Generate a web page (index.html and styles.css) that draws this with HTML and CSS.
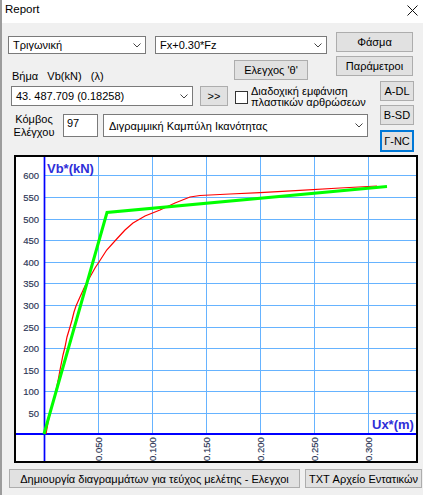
FILE: index.html
```html
<!DOCTYPE html>
<html>
<head>
<meta charset="utf-8">
<title>Report</title>
<link rel="stylesheet" href="styles.css">
</head>
<body>
<div class="titlebar">
  <span class="title">Report</span>
  <svg class="close" width="11" height="11" viewBox="0 0 11 11"><path d="M0.5 0.5 L10.5 10.5 M10.5 0.5 L0.5 10.5" stroke="#111" stroke-width="1" fill="none"/></svg>
</div>
<div class="content">
  <div class="block-a">
    <div class="left-a">
      <div class="row1">
        <div class="combo c1"><span class="ctext">Τριγωνική</span><span class="chevbox"><svg width="8" height="5" viewBox="0 0 8 5"><path d="M0.5 0.5 L4 4 L7.5 0.5" fill="none" stroke="#444"/></svg></span></div>
        <div class="combo c2"><span class="ctext">Fx+0.30*Fz</span><span class="chevbox"><svg width="8" height="5" viewBox="0 0 8 5"><path d="M0.5 0.5 L4 4 L7.5 0.5" fill="none" stroke="#444"/></svg></span></div>
      </div>
      <div class="row2">
        <span class="step-label">Βήμα&nbsp;&nbsp;&nbsp;Vb(kN)&nbsp;&nbsp;&nbsp;(λ)</span>
        <div class="btn theta">Ελεγχος 'θ'</div>
      </div>
    </div>
    <div class="right-a">
      <div class="btn wide">Φάσμα</div>
      <div class="btn wide">Παράμετροι</div>
    </div>
  </div>
  <div class="block-b">
    <div class="left-b">
      <div class="row3">
        <div class="combo c3"><span class="ctext">43. 487.709 (0.18258)</span><span class="chevbox"><svg width="8" height="5" viewBox="0 0 8 5"><path d="M0.5 0.5 L4 4 L7.5 0.5" fill="none" stroke="#444"/></svg></span></div>
        <div class="btn next">&gt;&gt;</div>
        <div class="checkbox"></div>
        <div class="cb-label">Διαδοχική εμφάνιση<br>πλαστικών αρθρώσεων</div>
      </div>
      <div class="row4">
        <div class="node-label">Κόμβος<br>Ελέγχου</div>
        <div class="edit">97</div>
        <div class="combo c4"><span class="ctext">Διγραμμική Καμπύλη Ικανότητας</span><span class="chevbox"><svg width="8" height="5" viewBox="0 0 8 5"><path d="M0.5 0.5 L4 4 L7.5 0.5" fill="none" stroke="#444"/></svg></span></div>
      </div>
    </div>
    <div class="right-b">
      <div class="btn small">A-DL</div>
      <div class="btn small sb">B-SD</div>
      <div class="btn small active">Γ-NC</div>
    </div>
  </div>
  <div class="chart">
    <svg class="plot" width="404" height="308" viewBox="14 155 404 308">
      <rect x="15" y="156" width="402" height="306" fill="#fff" stroke="#000" stroke-width="2"/>
      <g stroke="#66b3ff" stroke-width="1" shape-rendering="crispEdges" fill="none">
        <path d="M98.5 157V434M152.5 157V434M206.5 157V434M260.5 157V434M314.5 157V434M368.5 157V434"/>
        <path d="M44 175.5H416M44 197.5H416M44 219.5H416M44 240.5H416M44 262.5H416M44 283.5H416M44 305.5H416M44 327.5H416M44 348.5H416M44 370.5H416M44 391.5H416M44 413.5H416"/>
      </g>
      <g stroke="#0000ff" fill="none">
        <path d="M16 434H416" stroke-width="2"/>
        <path d="M44.5 157V461" stroke-width="1.7"/>
      </g>
      <g class="ylab" text-anchor="end">
        <text x="39" y="178.8">600</text>
        <text x="39" y="200.8">550</text>
        <text x="39" y="222.8">500</text>
        <text x="39" y="243.8">450</text>
        <text x="39" y="265.8">400</text>
        <text x="39" y="286.8">350</text>
        <text x="39" y="308.8">300</text>
        <text x="39" y="330.8">250</text>
        <text x="39" y="351.8">200</text>
        <text x="39" y="373.8">150</text>
        <text x="39" y="394.8">100</text>
        <text x="39" y="416.8">50</text>
      </g>
      <g class="xlab">
        <text transform="translate(101.8 461) rotate(-90)">0.050</text>
        <text transform="translate(155.8 461) rotate(-90)">0.100</text>
        <text transform="translate(209.8 461) rotate(-90)">0.150</text>
        <text transform="translate(263.8 461) rotate(-90)">0.200</text>
        <text transform="translate(317.8 461) rotate(-90)">0.250</text>
        <text transform="translate(371.8 461) rotate(-90)">0.300</text>
      </g>
      <text class="axtitle" x="47" y="173">Vb*(kN)</text>
      <text class="axtitle" x="372" y="428.5">Ux*(m)</text>
      <polyline fill="none" stroke="#ff0000" stroke-width="1.2" points="46,434 48.5,420 51,410 55,395 58,381 60,370 63,355 65,347 67,337 70,327 72,320 74,312 76,306 80,297 85,286 90,277 95,268 99,262 106.7,250 116.7,239 125,230 133,223 145,216 160,210 175,203 190,197 200,195.5 230,194 260,192.7 300,190.3 340,188 377,186"/>
      <polyline fill="none" stroke="#00ff00" stroke-width="3" points="44,434 107,212.5 387,186.5"/>
    </svg>
  </div>
  <div class="bottom">
    <div class="btn b1">Δημιουργία διαγραμμάτων για τεύχος μελέτης - Ελεγχοι</div>
    <div class="btn b2">TXT Αρχείο Εντατικών</div>
  </div>
</div>
</body>
</html>
```

FILE: styles.css
```css
* { box-sizing: border-box; }
html, body {
  margin: 0;
  padding: 0;
}
body {
  width: 423px;
  height: 495px;
  overflow: hidden;
  background: #f0f0f0;
  font-family: "Liberation Sans", Arial, sans-serif;
  font-size: 11px;
  color: #000;
}
.titlebar {
  height: 23px;
  background: #fff;
  border-left: 2px solid #9c9c9c;
  display: flex;
  align-items: flex-start;
  padding: 2px 0 0 3px;
}
.title {
  font-size: 11.5px;
  line-height: 15px;
}
.close {
  margin-left: auto;
  margin-right: 5px;
  margin-top: 3px;
}
.content {
  height: 472px;
  border-left: 2px solid #9c9c9c;
  padding: 9px 9px 0 6px;
}
.block-a {
  display: flex;
  height: 49px;
}
.left-a {
  width: 328px;
}
.row1 {
  display: flex;
  gap: 9px;
  margin-top: 4px;
}
.combo {
  background: #fff;
  border: 1px solid #7a7a7a;
  display: flex;
  align-items: center;
  justify-content: space-between;
  padding-left: 4px;
  white-space: nowrap;
}
.chevbox {
  width: 17px;
  display: flex;
  justify-content: center;
  align-items: center;
}
.chevbox svg { display: block; }
.c1 { width: 138px; height: 18px; }
.c2 { width: 172px; height: 18px; }
.row2 {
  display: flex;
  align-items: flex-end;
  margin-top: 6px;
  height: 20px;
}
.step-label {
  margin-left: 4px;
  line-height: 13px;
  margin-bottom: -3px;
  white-space: nowrap;
}
.btn {
  background: #e1e1e1;
  border: 1px solid #adadad;
  display: flex;
  align-items: center;
  justify-content: center;
  white-space: nowrap;
  flex-shrink: 0;
}
.theta {
  width: 74px;
  height: 20px;
  margin-left: auto;
  margin-right: 28px;
}
.right-a {
  width: 77px;
  display: flex;
  flex-direction: column;
  gap: 4px;
}
.wide { width: 77px; height: 20px; }
.block-b {
  display: flex;
  height: 71px;
}
.left-b {
  width: 372px;
}
.row3 {
  display: flex;
  align-items: flex-start;
  margin-top: 3px;
  height: 23px;
}
.c3 {
  margin-left: 3px;
  margin-top: 2px;
  width: 182px;
  height: 20px;
}
.next {
  margin-left: 7px;
  margin-top: 2px;
  width: 28px;
  height: 20px;
}
.checkbox {
  margin-left: 7px;
  margin-top: 7px;
  width: 13px;
  height: 13px;
  background: #fff;
  border: 1px solid #333;
  flex-shrink: 0;
}
.cb-label {
  margin-left: 3px;
  margin-top: 1.5px;
  line-height: 11.5px;
  white-space: nowrap;
}
.row4 {
  display: flex;
  align-items: flex-start;
  margin-top: 7px;
  height: 23px;
}
.node-label {
  margin-left: 3px;
  margin-top: -1px;
  width: 46px;
  text-align: center;
  line-height: 12.5px;
  flex-shrink: 0;
}
.edit {
  margin-left: 6px;
  width: 35px;
  height: 23px;
  background: #fff;
  border: 1px solid #7a7a7a;
  padding: 2px 3px;
  line-height: 13px;
  flex-shrink: 0;
}
.c4 {
  margin-left: 5px;
  width: 265px;
  height: 23px;
  padding-left: 5px;
}
.right-b {
  width: 34px;
  display: flex;
  flex-direction: column;
}
.small { width: 34px; height: 20px; }
.sb { margin-top: 4px; }
.active {
  margin-top: 5px;
  height: 22px;
  border: 2px solid #0078d7;
}
.chart {
  margin: 3px 0 0 6px;
  width: 404px;
  height: 308px;
}
.plot { display: block; }
.ylab text, .xlab text {
  font-family: "Liberation Sans", Arial, sans-serif;
  font-size: 9.5px;
  fill: #2c3656;
  stroke: #2c3656;
  stroke-width: 0.15px;
}
.axtitle {
  font-family: "Liberation Sans", Arial, sans-serif;
  font-size: 13px;
  font-weight: bold;
  fill: #2e2ed8;
}
.bottom {
  display: flex;
  gap: 5px;
  margin-top: 6px;
}
.b1 {
  margin-left: 1px;
  width: 291px;
  height: 19px;
}
.b2 {
  width: 117px;
  height: 19px;
}
```
